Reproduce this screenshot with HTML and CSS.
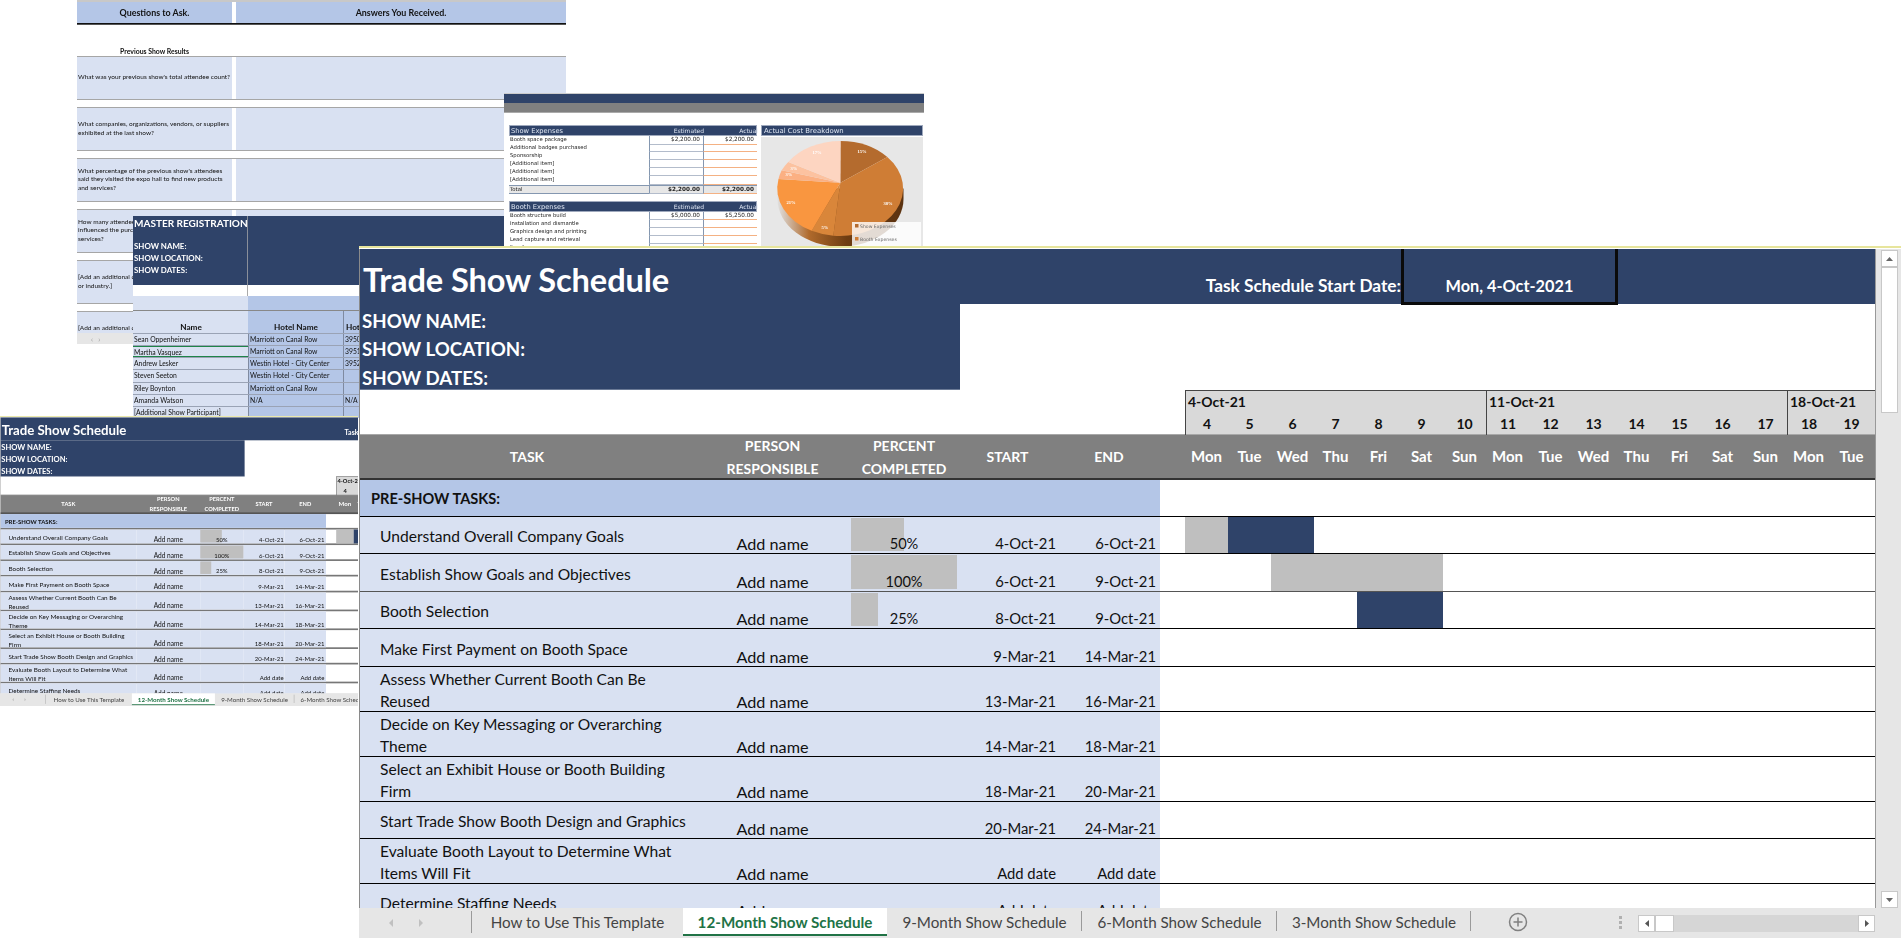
FILE: index.html
```html
<!DOCTYPE html>
<html lang="en">
<head>
<meta charset="utf-8">
<title>Trade Show Templates</title>
<link rel="stylesheet" href="styles.css">
</head>
<body>
<main class="desk">

<section class="win win-a">
  <div class="a-head"><div>Questions to Ask.</div><div>Answers You Received.</div></div>
  <div class="a-sub">Previous Show Results</div>
  <div class="a-row"><div>What was your previous show's total attendee count?</div><div></div></div>
  <div class="a-row"><div>What companies, organizations, vendors, or suppliers<br>exhibited at the last show?</div><div></div></div>
  <div class="a-row"><div>What percentage of the previous show's attendees<br>said they visited the expo hall to find new products<br>and services?</div><div></div></div>
  <div class="a-row"><div>How many attendees said the show<br>influenced the purchase of products or<br>services?</div><div></div></div>
  <div class="a-row"><div>[Add an additional question about the show<br>or industry.]</div><div></div></div>
  <div class="a-row a-last"><div>[Add an additional question]</div><div></div></div>
  <div class="a-tabs"><span class="mini-arrows">‹ &nbsp; ›</span></div>
</section>

<section class="win win-b">
  <div class="b-banner">
    <div class="b-title">
      <div class="b-h1">MASTER REGISTRATION</div>
      <div>SHOW NAME:</div><div>SHOW LOCATION:</div><div>SHOW DATES:</div>
    </div>
    <div></div>
  </div>
  <div class="b-gap"><div></div><div></div></div>
  <div class="b-row b-band"><div></div><div></div><div></div></div>
  <div class="b-row b-names"><div>Name</div><div>Hotel Name</div><div class="b-left">Hotel Address</div></div>
  <div class="b-row"><div>Sean Oppenheimer</div><div>Marriott on Canal Row</div><div>39509 Canal Row</div></div>
  <div class="b-row b-selected"><div>Martha Vasquez</div><div>Marriott on Canal Row</div><div>39519 Canal Row</div></div>
  <div class="b-row"><div>Andrew Lesker</div><div>Westin Hotel - City Center</div><div>39529 Center St</div></div>
  <div class="b-row"><div>Steven Seeton</div><div>Westin Hotel - City Center</div><div></div></div>
  <div class="b-row"><div>Riley Boynton</div><div>Marriott on Canal Row</div><div></div></div>
  <div class="b-row"><div>Amanda Watson</div><div>N/A</div><div>N/A</div></div>
  <div class="b-row"><div>[Additional Show Participant]</div><div></div><div></div></div>
</section>

<section class="win win-d">
  <div class="d-navy"></div>
  <div class="d-gray"></div>
  <div class="d-body">
    <div class="d-tables">
      <div class="d-table">
        <div class="d-hdr"><span class="d-name">Show Expenses</span><span>Estimated</span><span>Actual</span></div>
        <div class="d-line"><div>Booth space package</div><div>$2,200.00</div><div>$2,200.00</div></div>
        <div class="d-line"><div>Additional badges purchased</div><div></div><div></div></div>
        <div class="d-line"><div>Sponsorship</div><div></div><div></div></div>
        <div class="d-line"><div>[Additional item]</div><div></div><div></div></div>
        <div class="d-line"><div>[Additional item]</div><div></div><div></div></div>
        <div class="d-line"><div>[Additional item]</div><div></div><div></div></div>
        <div class="d-line d-total"><div>Total</div><div>$2,200.00</div><div>$2,200.00</div></div>
      </div>
      <div class="d-table">
        <div class="d-hdr"><span class="d-name">Booth Expenses</span><span>Estimated</span><span>Actual</span></div>
        <div class="d-line"><div>Booth structure build</div><div>$5,000.00</div><div>$5,250.00</div></div>
        <div class="d-line"><div>Installation and dismantle</div><div></div><div></div></div>
        <div class="d-line"><div>Graphics design and printing</div><div></div><div></div></div>
        <div class="d-line"><div>Lead capture and retrieval</div><div></div><div></div></div>
        <div class="d-line"><div>Furniture</div><div></div><div></div></div>
      </div>
    </div>
    <div class="d-chart">
      <div class="d-hdr d-chart-hdr">Actual Cost Breakdown</div>
      <svg class="pie" viewBox="0 0 162 120" width="162" height="120">
        <defs>
          <linearGradient id="pieSide" x1="0" x2="1" y1="0" y2="0">
            <stop offset="0" stop-color="#e0e0e0"/><stop offset=".25" stop-color="#b06a2c"/><stop offset=".55" stop-color="#6e3d12"/><stop offset="1" stop-color="#5b3210"/>
          </linearGradient>
        </defs>
        <path d="M16.5 51.5V62A63 47.5 0 0 0 142.5 62V51.5Z" fill="url(#pieSide)"/>
        <path d="M79.3 45.7L79.5 4A63 47.5 0 0 1 126.3 20Z" fill="#b46b2e"/>
        <path d="M79.3 45.7L126.3 20A63 47.5 0 0 1 72.3 98.7Z" fill="#cf7d35"/>
        <path d="M79.3 45.7L72.3 98.7A63 47.5 0 0 1 50.7 93.8Z" fill="#d9863a"/>
        <path d="M79.3 45.7L50.7 93.8A63 47.5 0 0 1 17.5 42Z" fill="#f99640"/>
        <path d="M79.3 45.7L17.5 42A63 47.5 0 0 1 20.7 33.3Z" fill="#fbb083"/>
        <path d="M79.3 45.7L20.7 33.3A63 47.5 0 0 1 27.3 25Z" fill="#fcc2a0"/>
        <path d="M79.3 45.7L27.3 25A63 47.5 0 0 1 79.5 4Z" fill="#fdd5c1"/>
        <g class="pie-labels">
          <text x="101" y="16">15%</text><text x="127" y="68">38%</text><text x="64" y="92">5%</text>
          <text x="30" y="67">21%</text><text x="33" y="33">3%</text><text x="28" y="39">3%</text><text x="56" y="17">17%</text>
        </g>
        <rect x="91" y="85" width="69" height="35" fill="#fff" opacity=".82"/>
        <rect x="94" y="87" width="3.5" height="3.5" fill="#b46b2e"/>
        <text class="pie-legend" x="99" y="91">Show Expenses</text>
        <rect x="94" y="100" width="3.5" height="3.5" fill="#cf7d35"/>
        <text class="pie-legend" x="99" y="104">Booth Expenses</text>
      </svg>
    </div>
  </div>
</section>

<section class="win win-e">
  <div class="book book-small">
    <div class="sheet">
      <div class="banner">
        <div class="title">Trade Show Schedule</div>
        <div class="start-label">Task Schedule Start Date:</div>
        <div class="start-box">Mon, 4-Oct-2021</div>
      </div>
      <div class="meta"><div>SHOW NAME:</div><div>SHOW LOCATION:</div><div>SHOW DATES:</div></div>
      <div class="cal">
        <div class="wk">4-Oct-21</div><div class="wk">11-Oct-21</div><div class="wk wk-end">18-Oct-21</div>
        <div class="num first">4</div><div class="num">5</div><div class="num">6</div><div class="num">7</div><div class="num">8</div><div class="num">9</div><div class="num">10</div>
        <div class="num first">11</div><div class="num">12</div><div class="num">13</div><div class="num">14</div><div class="num">15</div><div class="num">16</div><div class="num">17</div>
        <div class="num first">18</div><div class="num">19</div><div class="num"></div>
      </div>
      <div class="row head">
        <div>TASK</div><div>PERSON<br>RESPONSIBLE</div><div>PERCENT<br>COMPLETED</div><div>START</div><div>END</div>
        <div class="dow"><span>Mon</span><span>Tue</span><span>Wed</span><span>Thu</span><span>Fri</span><span>Sat</span><span>Sun</span><span>Mon</span><span>Tue</span><span>Wed</span><span>Thu</span><span>Fri</span><span>Sat</span><span>Sun</span><span>Mon</span><span>Tue</span></div>
      </div>
      <div class="row section"><div class="section-name">PRE-SHOW TASKS:</div></div>
      <div class="row"><div class="task">Understand Overall Company Goals</div><div class="cell who">Add name</div><div class="cell pct"><i style="width:50%"></i><b>50%</b></div><div class="cell date">4-Oct-21</div><div class="cell date">6-Oct-21</div><div class="gantt"><i class="done" style="grid-column:1/2"></i><i class="todo" style="grid-column:2/4"></i></div></div>
      <div class="row line-soft"><div class="task">Establish Show Goals and Objectives</div><div class="cell who">Add name</div><div class="cell pct"><i style="width:100%"></i><b>100%</b></div><div class="cell date">6-Oct-21</div><div class="cell date">9-Oct-21</div><div class="gantt"><i class="done" style="grid-column:3/7"></i></div></div>
      <div class="row"><div class="task">Booth Selection</div><div class="cell who">Add name</div><div class="cell pct"><i style="width:25%"></i><b>25%</b></div><div class="cell date">8-Oct-21</div><div class="cell date">9-Oct-21</div><div class="gantt"><i class="todo" style="grid-column:5/7"></i></div></div>
      <div class="row"><div class="task">Make First Payment on Booth Space</div><div class="cell who">Add name</div><div class="cell pct"></div><div class="cell date">9-Mar-21</div><div class="cell date">14-Mar-21</div></div>
      <div class="row tall"><div class="task">Assess Whether Current Booth Can Be<br>Reused</div><div class="cell who">Add name</div><div class="cell pct"></div><div class="cell date">13-Mar-21</div><div class="cell date">16-Mar-21</div></div>
      <div class="row tall"><div class="task">Decide on Key Messaging or Overarching<br>Theme</div><div class="cell who">Add name</div><div class="cell pct"></div><div class="cell date">14-Mar-21</div><div class="cell date">18-Mar-21</div></div>
      <div class="row tall"><div class="task">Select an Exhibit House or Booth Building<br>Firm</div><div class="cell who">Add name</div><div class="cell pct"></div><div class="cell date">18-Mar-21</div><div class="cell date">20-Mar-21</div></div>
      <div class="row"><div class="task">Start Trade Show Booth Design and Graphics</div><div class="cell who">Add name</div><div class="cell pct"></div><div class="cell date">20-Mar-21</div><div class="cell date">24-Mar-21</div></div>
      <div class="row tall"><div class="task">Evaluate Booth Layout to Determine What<br>Items Will Fit</div><div class="cell who">Add name</div><div class="cell pct"></div><div class="cell date">Add date</div><div class="cell date">Add date</div></div>
      <div class="row"><div class="task">Determine Staffing Needs</div><div class="cell who">Add name</div><div class="cell pct"></div><div class="cell date">Add date</div><div class="cell date">Add date</div></div>
    </div>
    <div class="vbar">
      <div class="sbtn"><svg viewBox="0 0 9 6" width="9" height="6"><path d="M4.5 1L8 5H1Z"/></svg></div>
      <div class="vthumb"></div>
      <div class="vtrack"></div>
      <div class="sbtn"><svg viewBox="0 0 9 6" width="9" height="6"><path d="M1 1H8L4.5 5Z"/></svg></div>
    </div>
    <div class="tabbar">
      <div class="nav"><svg viewBox="0 0 6 10" width="6" height="10"><path d="M5 1L1 5L5 9Z"/></svg><svg viewBox="0 0 6 10" width="6" height="10"><path d="M1 1L5 5L1 9Z"/></svg></div>
      <div class="tab t-how">How to Use This Template</div>
      <div class="tab active t-12">12-Month Show Schedule</div>
      <div class="tab sep t-9">9-Month Show Schedule</div>
      <div class="tab sep t-6">6-Month Show Schedule</div>
      <div class="tab sep t-3">3-Month Show Schedule</div>
    </div>
  </div>
</section>

<section class="win win-c">
  <div class="book">
    <div class="sheet">
      <div class="banner">
        <div class="title">Trade Show Schedule</div>
        <div class="start-label">Task Schedule Start Date:</div>
        <div class="start-box">Mon, 4-Oct-2021</div>
      </div>
      <div class="meta"><div>SHOW NAME:</div><div>SHOW LOCATION:</div><div>SHOW DATES:</div></div>
      <div class="cal">
        <div class="wk">4-Oct-21</div><div class="wk">11-Oct-21</div><div class="wk wk-end">18-Oct-21</div>
        <div class="num first">4</div><div class="num">5</div><div class="num">6</div><div class="num">7</div><div class="num">8</div><div class="num">9</div><div class="num">10</div>
        <div class="num first">11</div><div class="num">12</div><div class="num">13</div><div class="num">14</div><div class="num">15</div><div class="num">16</div><div class="num">17</div>
        <div class="num first">18</div><div class="num">19</div><div class="num"></div>
      </div>
      <div class="row head">
        <div>TASK</div><div>PERSON<br>RESPONSIBLE</div><div>PERCENT<br>COMPLETED</div><div>START</div><div>END</div>
        <div class="dow"><span>Mon</span><span>Tue</span><span>Wed</span><span>Thu</span><span>Fri</span><span>Sat</span><span>Sun</span><span>Mon</span><span>Tue</span><span>Wed</span><span>Thu</span><span>Fri</span><span>Sat</span><span>Sun</span><span>Mon</span><span>Tue</span></div>
      </div>
      <div class="row section"><div class="section-name">PRE-SHOW TASKS:</div></div>
      <div class="row"><div class="task">Understand Overall Company Goals</div><div class="cell who">Add name</div><div class="cell pct"><i style="width:50%"></i><b>50%</b></div><div class="cell date">4-Oct-21</div><div class="cell date">6-Oct-21</div><div class="gantt"><i class="done" style="grid-column:1/2"></i><i class="todo" style="grid-column:2/4"></i></div></div>
      <div class="row line-soft"><div class="task">Establish Show Goals and Objectives</div><div class="cell who">Add name</div><div class="cell pct"><i style="width:100%"></i><b>100%</b></div><div class="cell date">6-Oct-21</div><div class="cell date">9-Oct-21</div><div class="gantt"><i class="done" style="grid-column:3/7"></i></div></div>
      <div class="row"><div class="task">Booth Selection</div><div class="cell who">Add name</div><div class="cell pct"><i style="width:25%"></i><b>25%</b></div><div class="cell date">8-Oct-21</div><div class="cell date">9-Oct-21</div><div class="gantt"><i class="todo" style="grid-column:5/7"></i></div></div>
      <div class="row"><div class="task">Make First Payment on Booth Space</div><div class="cell who">Add name</div><div class="cell pct"></div><div class="cell date">9-Mar-21</div><div class="cell date">14-Mar-21</div></div>
      <div class="row tall"><div class="task">Assess Whether Current Booth Can Be<br>Reused</div><div class="cell who">Add name</div><div class="cell pct"></div><div class="cell date">13-Mar-21</div><div class="cell date">16-Mar-21</div></div>
      <div class="row tall"><div class="task">Decide on Key Messaging or Overarching<br>Theme</div><div class="cell who">Add name</div><div class="cell pct"></div><div class="cell date">14-Mar-21</div><div class="cell date">18-Mar-21</div></div>
      <div class="row tall"><div class="task">Select an Exhibit House or Booth Building<br>Firm</div><div class="cell who">Add name</div><div class="cell pct"></div><div class="cell date">18-Mar-21</div><div class="cell date">20-Mar-21</div></div>
      <div class="row"><div class="task">Start Trade Show Booth Design and Graphics</div><div class="cell who">Add name</div><div class="cell pct"></div><div class="cell date">20-Mar-21</div><div class="cell date">24-Mar-21</div></div>
      <div class="row tall"><div class="task">Evaluate Booth Layout to Determine What<br>Items Will Fit</div><div class="cell who">Add name</div><div class="cell pct"></div><div class="cell date">Add date</div><div class="cell date">Add date</div></div>
      <div class="row"><div class="task">Determine Staffing Needs</div><div class="cell who">Add name</div><div class="cell pct"></div><div class="cell date">Add date</div><div class="cell date">Add date</div></div>
    </div>
    <div class="vbar">
      <div class="sbtn"><svg viewBox="0 0 9 6" width="9" height="6"><path d="M4.5 1L8 5H1Z"/></svg></div>
      <div class="vthumb"></div>
      <div class="vtrack"></div>
      <div class="sbtn"><svg viewBox="0 0 9 6" width="9" height="6"><path d="M1 1H8L4.5 5Z"/></svg></div>
    </div>
    <div class="tabbar">
      <div class="nav"><svg viewBox="0 0 6 10" width="6" height="10"><path d="M5 1L1 5L5 9Z"/></svg><svg viewBox="0 0 6 10" width="6" height="10"><path d="M1 1L5 5L1 9Z"/></svg></div>
      <div class="tab t-how">How to Use This Template</div>
      <div class="tab active t-12">12-Month Show Schedule</div>
      <div class="tab sep t-9">9-Month Show Schedule</div>
      <div class="tab sep t-6">6-Month Show Schedule</div>
      <div class="tab sep t-3">3-Month Show Schedule</div>
      <div class="add"><svg viewBox="0 0 20 20" width="20" height="20"><circle cx="10" cy="10" r="8.5"/><path d="M10 5.5V14.5M5.5 10H14.5"/></svg></div>
      <div class="dots"></div>
      <div class="hbar">
        <div class="hbtn"><svg viewBox="0 0 6 9" width="6" height="9"><path d="M5 1V8L1 4.5Z"/></svg></div>
        <div class="hthumb"></div>
        <div class="htrack"></div>
        <div class="hbtn"><svg viewBox="0 0 6 9" width="6" height="9"><path d="M1 1V8L5 4.5Z"/></svg></div>
      </div>
    </div>
  </div>
</section>

</main>
</body>
</html>
```
FILE: styles.css
```css
* { box-sizing: border-box; }
html, body { margin: 0; padding: 0; background: #fff; }
body { font-family: Lato, "Liberation Sans", sans-serif; color: #111; overflow: hidden; }
.desk { position: relative; width: 1901px; height: 938px; overflow: hidden; }
.win { position: absolute; overflow: hidden; }

/* Back window: questions */
.win-a { left: 77px; top: 0; width: 489px; height: 344px; background: #fff; font-size: 6.5px; line-height: 8.6px; filter: blur(.3px); border-top: 2px solid #c8c8c8; }
.a-head { display: grid; grid-template-columns: 155px 1fr; column-gap: 4px; height: 22px; border-bottom: 1px solid #111; box-shadow: 0 1px 0 #555; font-weight: 700; font-size: 8.9px; text-align: center; }
.a-head > div { background: #b4c6e7; line-height: 21px; }
.a-sub { height: 32px; width: 155px; padding-top: 23px; text-align: center; font-weight: 700; font-size: 6.9px; }
.a-row { display: grid; grid-template-columns: 155px 1fr; column-gap: 4px; height: 43.5px; margin-bottom: 7.5px; border-top: 1px solid #a6a6a6; border-bottom: 1px solid #a6a6a6; white-space: nowrap; }
.a-row > div { background: #d9e1f2; display: flex; align-items: center; padding-left: 1px; }
.a-last { height: 22px; margin: 0; border-bottom: 0; }
.a-last > div { align-items: flex-end; }
.a-tabs { height: 14px; background: #e6e6e6; color: #999; font-size: 7px; line-height: 13px; padding-left: 14px; }

/* Back window: master registration */
.win-b { left: 133px; top: 216px; width: 400px; height: 202px; background: #fff; font-size: 6.8px; filter: blur(.3px); }
.b-banner { display: grid; grid-template-columns: 115px 1fr; height: 69px; background: #2f4369; color: #fff; font-weight: 700; font-size: 7.9px; line-height: 12.2px; white-space: nowrap; }
.b-banner > div:first-child { padding: 0 0 0 1px; border-right: 1px solid #8a8f9a; }
.b-h1 { font-size: 10px; line-height: 14px; margin-bottom: 10px; }
.b-gap { display: grid; grid-template-columns: 115px 1fr; height: 11px; }
.b-gap > div:first-child { border-right: 1px solid #aaa; }
.b-row { display: grid; grid-template-columns: 115px 95px 1fr; height: 12.15px; line-height: 11px; border-bottom: 1px solid #9aa3b5; white-space: nowrap; position: relative; }
.b-row > div { overflow: hidden; padding-left: 1px; background: #b4c6e7; }
.b-row > div + div { border-left: 1px solid #7f8aa0; padding-left: 1px; }
.b-row > div:first-child { background: #d9e1f2; border-left: 0; }
.b-row > div:nth-child(2) { border-left: 1px solid #7f8aa0; }
.b-band { height: 15px; border-bottom: 1px solid #888; }
.b-band > div + div { border-left: 0 !important; }
.b-names { height: 23px; font-weight: 700; font-size: 8.2px; text-align: center; }
.b-names > div { line-height: 33px; }
.b-names > div:nth-child(2) { border-left: 0; }
.b-names .b-left { text-align: left; padding-left: 2px; }
.b-selected > div:first-child { border-top: 1px solid #1e8449; box-shadow: inset 0 -1px 0 #1e8449; }

/* Back window: expense budget */
.win-d { left: 504px; top: 93px; width: 420px; height: 220px; background: #fff; border-top: 1px solid #ccc; font-family: "DejaVu Sans", sans-serif; font-size: 5.3px; color: #222; filter: blur(.25px); }
.d-navy { height: 9px; background: #2f4369; }
.d-gray { height: 10px; background: #808080; border-bottom: 1px solid #aaa; }
.d-body { display: flex; padding: 12px 1px 0 5px; gap: 4px; }
.d-tables { width: 248px; display: flex; flex-direction: column; gap: 7px; }
.d-hdr { display: grid; grid-template-columns: 140px 54px 54px; height: 11px; line-height: 10px; background: #2f4369; color: #dfe6f3; text-align: right; border: 1px solid #9fa9bd; padding-right: 1px; font-size: 6px; }
.d-name { text-align: left; padding-left: 1px; font-size: 6.7px; }
.d-chart { width: 162px; }
.d-chart-hdr { display: block; text-align: left; font-size: 6.9px; padding-left: 2px; margin-bottom: 1px; }
.d-line { display: grid; grid-template-columns: 140px 54px 54px; height: 8.1px; line-height: 7.6px; white-space: nowrap; }
.d-line > div { padding: 0 1px; }
.d-line > div + div { text-align: right; padding-right: 3px; font-size: 5.7px; border-left: 1px solid #8497b0; border-bottom: 1px solid #b3bccb; }
.d-line > div:last-child { border-left: 1px solid #8497b0; border-bottom: 1px solid #f4b183; }
.d-total { background: #e7e7e7; border-top: 1px solid #8497b0; border-bottom: 1px solid #8497b0; font-weight: 700; height: 9px; }
.d-total > div:first-child { font-weight: 400; }
.pie { display: block; background: #e7e7e7; }
.pie-labels text { fill: #fff; font-size: 4.6px; font-weight: 700; text-anchor: middle; font-family: "Liberation Serif", serif; }
.pie-legend { fill: #666; font-size: 4.6px; }

/* Schedule window (full size and thumbnail) */
.win-c { left: 359px; top: 246px; width: 1542px; height: 692px; }
.win-e { left: 0; top: 416px; width: 358px; height: 290px; filter: blur(.25px); }
.book { width: 1542px; height: 692px; display: grid; grid-template-columns: 1517px 25px; grid-template-rows: 659px 30px; background: #e6e6e6; border-top: 3px solid #fff; position: relative; }
.book::before { content: ""; position: absolute; left: 0; right: 0; top: -3px; height: 2px; background: #e7e59c; }
.book-small { transform: scale(.407, .419); transform-origin: 0 0; }
.book-small .row { border-bottom: 4px solid #777; }
.book-small .head { border-bottom: 4px solid #555; }
.sheet { background: #fff; overflow: hidden; border-left: 1px solid #8a8a8a; border-right: 1px solid #999; }
.banner { display: flex; align-items: flex-end; height: 55px; background: #2f4369; color: #fff; font-weight: 700; }
.title { font-size: 32.6px; height: 55px; padding: 6px 0 0 3px; line-height: 49px; width: 826px; white-space: nowrap; letter-spacing: -.1px; }
.start-label { font-size: 17.3px; line-height: 36px; width: 215px; text-align: right; white-space: nowrap; }
.start-box { width: 217px; height: 56px; line-height: 74px; margin-bottom: -1px; font-size: 16.3px; text-align: center; border: 3px solid #0a0a0a; border-top: 0; }
.meta { width: 600px; height: 86px; background: #2f4369; color: #fff; font-weight: 700; font-size: 18.7px; line-height: 28.3px; padding: 3px 0 0 2px; border-bottom: 1px solid #6b7a96; }
.cal { display: grid; grid-template-columns: repeat(16, 43px) 1fr; grid-template-rows: 22px 22px; height: 44px; margin-left: 825px; background: #d9d9d9; border-top: 1px solid #444; font-weight: 700; font-size: 14px; line-height: 22px; }
.wk { grid-column: span 7; border-left: 1px solid #444; padding-left: 2px; }
.wk-end { grid-column: span 3; }
.num { text-align: center; }
.num.first { border-left: 1px solid #444; }

.row { display: grid; grid-template-columns: 334px 157px 106px 101px 102px 25px 688px 1fr; grid-template-rows: minmax(0, 1fr); height: 37.4px; border-bottom: 1px solid #000; font-size: 14.6px; }
.head { height: 46px; background: #808080; color: #fff; font-size: 14px; font-weight: 700; line-height: 23px; text-align: center; border-top: 1px solid #a8a8a8; border-bottom: 2px solid #333; }
.head > div { display: flex; align-items: center; justify-content: center; }
.head .dow { grid-column: 7; display: grid; grid-template-columns: repeat(16, 43px); font-size: 15px; align-items: center; justify-items: center; }
.section { height: 37px; }
.section-name { grid-column: 1 / 6; background: #b4c6e7; font-weight: 700; line-height: 38px; padding-left: 11px; }
.task, .cell { background: #d9e1f2; white-space: nowrap; }
.task { display: flex; align-items: center; padding: 3px 0 0 20px; font-size: 15.6px; line-height: 22.5px; }
.cell { line-height: 19px; }
.tall { height: 45px; }
.tall .task { display: block; padding-top: 1px; }
.line-soft { border-bottom-color: #555; }
.cell { display: flex; align-items: flex-end; }
.who { justify-content: center; font-size: 16.2px; }
.date { justify-content: flex-end; padding-right: 2px; font-size: 14.8px; }
.date + .date { padding-right: 4px; }
.pct { position: relative; justify-content: center; }
.pct i { position: absolute; left: 0; top: 1px; bottom: 2px; background: #bfbfbf; }
.pct b { position: relative; font-weight: 400; }
.gantt { grid-column: 7; display: grid; grid-template-columns: repeat(16, 43px); }
.done { background: #bfbfbf; }
.todo { background: #2f4369; }

.vbar { grid-row: 1; grid-column: 2; display: flex; flex-direction: column; padding: 1px 3px 0 5px; }
.sbtn { height: 17px; flex: none; display: flex; align-items: center; justify-content: center; background: #fff; border: 1px solid #c8c8c8; fill: #666; }
.vthumb { height: 146px; flex: none; background: #fff; border: 1px solid #c8c8c8; }
.vtrack { flex: 1; background: #e6e6e6; }

.tabbar { grid-row: 2; grid-column: 1 / 3; display: flex; align-items: stretch; height: 30px; background: #e6e6e6; font-size: 15.2px; line-height: 29px; color: #444; white-space: nowrap; }
.nav { width: 113px; display: flex; align-items: center; justify-content: center; gap: 24px; fill: #c0c0c0; position: relative; padding-right: 20px; }
.nav::after, .tab.sep::after { content: ""; position: absolute; right: 0; top: 3px; bottom: 5px; width: 1px; background: #9a9a9a; }
.tab { position: relative; text-align: center; height: 28px; }
.t-how { width: 211px; }
.t-12 { width: 204px; }
.t-9 { width: 195px; }
.t-6 { width: 195px; }
.t-3 { width: 194px; }
.active { background: #fff; color: #217346; font-weight: 700; border-bottom: 2px solid #217346; }
.add { width: 94px; display: flex; align-items: center; justify-content: center; height: 28px; }
.add svg { fill: none; stroke: #808080; stroke-width: 1.5; }
.dots { width: 3px; height: 13px; margin: 8px 0 0 54px; border-left: 3px dotted #b0b0b0; }
.hbar { display: flex; height: 17px; width: 237px; margin: 7px 0 0 16px; background: #d6d6d6; }
.hbtn { width: 17px; flex: none; display: flex; align-items: center; justify-content: center; background: #fff; border: 1px solid #c8c8c8; fill: #555; }
.hthumb { width: 19px; flex: none; background: #fff; border: 1px solid #c8c8c8; }
.htrack { flex: 1; }
```
